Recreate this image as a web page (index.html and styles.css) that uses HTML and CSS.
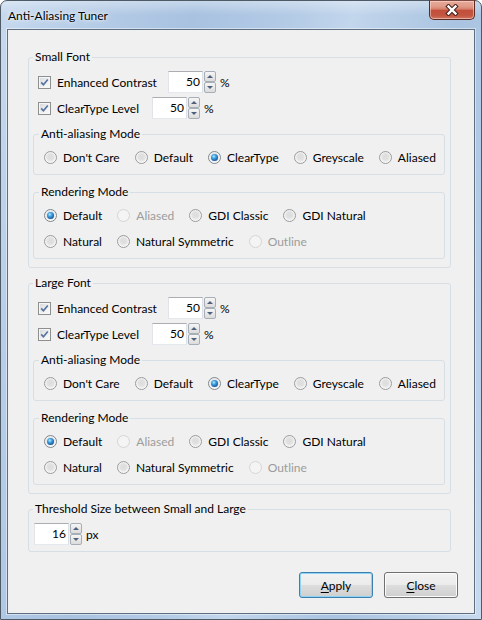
FILE: index.html
```html
<!DOCTYPE html>
<html>
<head>
<meta charset="utf-8">
<title>Anti-Aliasing Tuner</title>
<link rel="stylesheet" href="styles.css">
</head>
<body>
<div class="window">
  <div class="titlebar">
    <span class="title">Anti-Aliasing Tuner</span>
    <div class="close-btn">
      <svg width="14" height="12" viewBox="0 0 14 12">
        <path d="M3.5 2.5 L10.5 9.5 M10.5 2.5 L3.5 9.5" stroke="#46211c" stroke-width="4.4" stroke-linecap="square" fill="none"/>
        <path d="M3.5 2.5 L10.5 9.5 M10.5 2.5 L3.5 9.5" stroke="#ffffff" stroke-width="2.4" stroke-linecap="square" fill="none"/>
      </svg>
    </div>
  </div>
  <div class="client">

    <fieldset class="group">
      <legend>Small Font</legend>
      <div class="group-body">
        <div class="check-row">
          <span class="checkbox"><svg width="11" height="11" viewBox="0 0 11 11"><path d="M2.2 5.4 L4.4 7.8 L8.8 2.4" stroke="#5571a0" stroke-width="1.6" fill="none"/></svg></span>
          <span class="label">Enhanced Contrast</span>
          <div class="numeric ec"><span class="tb">50</span><span class="spin"><span class="up"><i></i></span><span class="down"><i></i></span></span></div>
          <span class="unit">%</span>
        </div>
        <div class="check-row">
          <span class="checkbox"><svg width="11" height="11" viewBox="0 0 11 11"><path d="M2.2 5.4 L4.4 7.8 L8.8 2.4" stroke="#5571a0" stroke-width="1.6" fill="none"/></svg></span>
          <span class="label">ClearType Level</span>
          <div class="numeric ct"><span class="tb">50</span><span class="spin"><span class="up"><i></i></span><span class="down"><i></i></span></span></div>
          <span class="unit">%</span>
        </div>

        <fieldset class="group inner mode">
          <legend>Anti-aliasing Mode</legend>
          <div class="inner-body">
            <div class="radio-row">
              <span class="opt"><span class="radio"></span>Don't Care</span>
              <span class="opt"><span class="radio"></span>Default</span>
              <span class="opt"><span class="radio on"><b></b></span>ClearType</span>
              <span class="opt"><span class="radio"></span>Greyscale</span>
              <span class="opt"><span class="radio"></span>Aliased</span>
            </div>
          </div>
        </fieldset>

        <fieldset class="group inner render">
          <legend>Rendering Mode</legend>
          <div class="inner-body">
            <div class="radio-row">
              <span class="opt"><span class="radio on"><b></b></span>Default</span>
              <span class="opt disabled"><span class="radio"></span>Aliased</span>
              <span class="opt"><span class="radio"></span>GDI Classic</span>
              <span class="opt"><span class="radio"></span>GDI Natural</span>
            </div>
            <div class="radio-row">
              <span class="opt"><span class="radio"></span>Natural</span>
              <span class="opt"><span class="radio"></span>Natural Symmetric</span>
              <span class="opt disabled"><span class="radio"></span>Outline</span>
            </div>
          </div>
        </fieldset>
      </div>
    </fieldset>

    <fieldset class="group next">
      <legend>Large Font</legend>
      <div class="group-body">
        <div class="check-row">
          <span class="checkbox"><svg width="11" height="11" viewBox="0 0 11 11"><path d="M2.2 5.4 L4.4 7.8 L8.8 2.4" stroke="#5571a0" stroke-width="1.6" fill="none"/></svg></span>
          <span class="label">Enhanced Contrast</span>
          <div class="numeric ec"><span class="tb">50</span><span class="spin"><span class="up"><i></i></span><span class="down"><i></i></span></span></div>
          <span class="unit">%</span>
        </div>
        <div class="check-row">
          <span class="checkbox"><svg width="11" height="11" viewBox="0 0 11 11"><path d="M2.2 5.4 L4.4 7.8 L8.8 2.4" stroke="#5571a0" stroke-width="1.6" fill="none"/></svg></span>
          <span class="label">ClearType Level</span>
          <div class="numeric ct"><span class="tb">50</span><span class="spin"><span class="up"><i></i></span><span class="down"><i></i></span></span></div>
          <span class="unit">%</span>
        </div>

        <fieldset class="group inner mode">
          <legend>Anti-aliasing Mode</legend>
          <div class="inner-body">
            <div class="radio-row">
              <span class="opt"><span class="radio"></span>Don't Care</span>
              <span class="opt"><span class="radio"></span>Default</span>
              <span class="opt"><span class="radio on"><b></b></span>ClearType</span>
              <span class="opt"><span class="radio"></span>Greyscale</span>
              <span class="opt"><span class="radio"></span>Aliased</span>
            </div>
          </div>
        </fieldset>

        <fieldset class="group inner render">
          <legend>Rendering Mode</legend>
          <div class="inner-body">
            <div class="radio-row">
              <span class="opt"><span class="radio on"><b></b></span>Default</span>
              <span class="opt disabled"><span class="radio"></span>Aliased</span>
              <span class="opt"><span class="radio"></span>GDI Classic</span>
              <span class="opt"><span class="radio"></span>GDI Natural</span>
            </div>
            <div class="radio-row">
              <span class="opt"><span class="radio"></span>Natural</span>
              <span class="opt"><span class="radio"></span>Natural Symmetric</span>
              <span class="opt disabled"><span class="radio"></span>Outline</span>
            </div>
          </div>
        </fieldset>
      </div>
    </fieldset>

    <fieldset class="group next">
      <legend>Threshold Size between Small and Large</legend>
      <div class="threshold-body">
        <div class="numeric th"><span class="tb">16</span><span class="spin"><span class="up"><i></i></span><span class="down"><i></i></span></span></div>
        <span class="unit">px</span>
      </div>
    </fieldset>

    <div class="buttons">
      <button class="btn default"><u>A</u>pply</button>
      <button class="btn"><u>C</u>lose</button>
    </div>
  </div>
</div>
</body>
</html>
```
FILE: styles.css
```css
html, body {
  margin: 0;
  padding: 0;
  background: #ffffff;
}

body {
  font-family: Lato, "Liberation Sans", sans-serif;
  font-size: 12px;
  color: #000;
}

.window {
  width: 482px;
  height: 620px;
  box-sizing: border-box;
  border: 1px solid #4f5a67;
  border-radius: 7px 7px 0 0;
  padding: 0 6px 5px 6px;
  background:
    linear-gradient(180deg, rgba(255,255,255,0.35) 0, rgba(255,255,255,0) 14px),
    linear-gradient(102deg, #c6d9ee 0%, #b8cee8 12%, #a8c2e0 32%, #b4cbe6 48%, #c2d6ec 58%, #a9c3e0 76%, #b9cfe8 90%, #c8daee 100%);
  display: flex;
  flex-direction: column;
}

.titlebar {
  height: 28px;
  display: flex;
  justify-content: space-between;
  align-items: flex-start;
}

.title {
  padding-left: 1px;
  line-height: 29px;
  font-size: 12px;
  color: #000;
  text-shadow: 0 0 6px rgba(255,255,255,0.9), 0 0 3px rgba(255,255,255,0.8);
}

.close-btn {
  margin-top: -1px;
  width: 46px;
  height: 20px;
  box-sizing: border-box;
  border: 1px solid #5a2b25;
  border-top-color: #7c4a44;
  border-radius: 0 0 5px 5px;
  background: linear-gradient(180deg, #e8ab9b 0%, #e09a88 30%, #d6806b 45%, #c24f3b 52%, #c25641 80%, #cf7560 100%);
  box-shadow: inset 0 0 0 1px rgba(255,220,210,0.55);
  display: flex;
  align-items: center;
  justify-content: center;
}

.close-btn svg {
  display: block;
}

.client {
  flex: 1;
  border: 1px solid #5f6f82;
  box-shadow: 0 0 0 1px rgba(255,255,255,0.45);
  background: #f0f0f0;
  padding: 19px 23px 0 20px;
  display: flex;
  flex-direction: column;
}

/* group boxes */
.group {
  margin: 0;
  padding: 0;
  min-width: 0;
  border: 1px solid #d5dfe5;
  border-radius: 3px;
}

.group > legend {
  padding: 0 2px;
  margin-left: 4px;
  line-height: 16px;
  height: 16px;
  font-size: 12px;
  color: #000;
}

.group.next {
  margin-top: 7px;
}

.group-body {
  padding: 4px 5px 8px 4px;
}

.group.inner {
  margin-top: 5px;
}

.group.inner > legend {
  margin-left: 5px;
}

.group.inner.render {
  margin-top: 9px;
}

.inner-body {
  padding: 4px 0 6px 10px;
  display: flex;
  flex-direction: column;
  gap: 4px;
}

/* checkbox rows */
.check-row {
  height: 26px;
  display: flex;
  align-items: center;
  padding-left: 5px;
}

.checkbox {
  width: 13px;
  height: 13px;
  box-sizing: border-box;
  border: 1px solid #8e8f8f;
  background: linear-gradient(135deg, #d3d7dc 0%, #eceded 50%, #fbfbfb 100%);
  box-shadow: inset 0 0 0 1px #f6f6f6;
  display: flex;
  align-items: center;
  justify-content: center;
  flex: none;
}

.checkbox svg {
  display: block;
}

.label {
  margin-left: 6px;
}

/* numeric up-down */
.numeric {
  display: flex;
  height: 22px;
}

.numeric.ec {
  margin-left: 11px;
}

.numeric.ct {
  margin-left: 13px;
}

.tb {
  width: 35px;
  height: 22px;
  box-sizing: border-box;
  background: #fff;
  border: 1px solid #dbdfe6;
  border-top-color: #abadb3;
  border-left-color: #e2e3ea;
  border-bottom-color: #e3e9ef;
  text-align: right;
  padding-right: 2px;
  line-height: 20px;
}

.spin {
  width: 12px;
  height: 22px;
  margin-left: 1px;
  display: flex;
  flex-direction: column;
}

.spin > span {
  flex: 1;
  box-sizing: border-box;
  border: 1px solid #a7aeb6;
  border-radius: 2px;
  background: linear-gradient(180deg, #f6f6f6 0%, #e8e8e8 50%, #dcdcdc 100%);
  display: flex;
  align-items: center;
  justify-content: center;
}

.spin i {
  width: 0;
  height: 0;
  border-left: 3px solid transparent;
  border-right: 3px solid transparent;
}

.spin .up i {
  border-bottom: 3px solid #4f607c;
}

.spin .down i {
  border-top: 3px solid #4f607c;
}

.unit {
  margin-left: 4px;
}

/* radio rows */
.radio-row {
  height: 22px;
  display: flex;
  align-items: center;
}

.opt {
  display: flex;
  align-items: center;
  margin-right: 15px;
  white-space: nowrap;
}

.radio {
  width: 13px;
  height: 13px;
  box-sizing: border-box;
  border-radius: 50%;
  border: 1px solid #9b9b9b;
  background: radial-gradient(circle at 50% 45%, #dcdcdc 0%, #e2e2e2 40%, #f2f2f2 60%, #ffffff 80%);
  margin-right: 6px;
  display: flex;
  align-items: center;
  justify-content: center;
  flex: none;
}

.radio.on {
  border-color: #7e8890;
}

.radio b {
  width: 7px;
  height: 7px;
  border-radius: 50%;
  background: radial-gradient(circle at 40% 35%, #b6ecff 0%, #43a6e6 30%, #1c5d9e 70%, #103e6e 100%);
}

.opt.disabled {
  color: #9c9c9c;
}

.opt.disabled .radio {
  border-color: #d5d5d5;
  background: #f4f4f4;
}

/* threshold */
.threshold-body {
  padding: 6px 5px 6px 5px;
  display: flex;
  align-items: center;
}

.numeric.th .tb {
  width: 35px;
}

/* buttons */
.buttons {
  margin-top: 20px;
  margin-right: -7px;
  display: flex;
  justify-content: flex-end;
  gap: 11px;
}

.btn {
  width: 74px;
  height: 26px;
  box-sizing: border-box;
  font-family: Lato, "Liberation Sans", sans-serif;
  font-size: 12px;
  color: #000;
  border: 1px solid #707070;
  border-radius: 3px;
  background: linear-gradient(180deg, #f2f2f2 0%, #ebebeb 48%, #dddddd 52%, #cfcfcf 100%);
  box-shadow: inset 0 0 0 1px #fcfcfc;
  padding: 0;
}

.btn.default {
  border-color: #3c7fb1;
  box-shadow: inset 0 0 0 1px #8fd3f4;
}

.btn u {
  text-decoration: underline;
  text-underline-offset: 2px;
}
```
